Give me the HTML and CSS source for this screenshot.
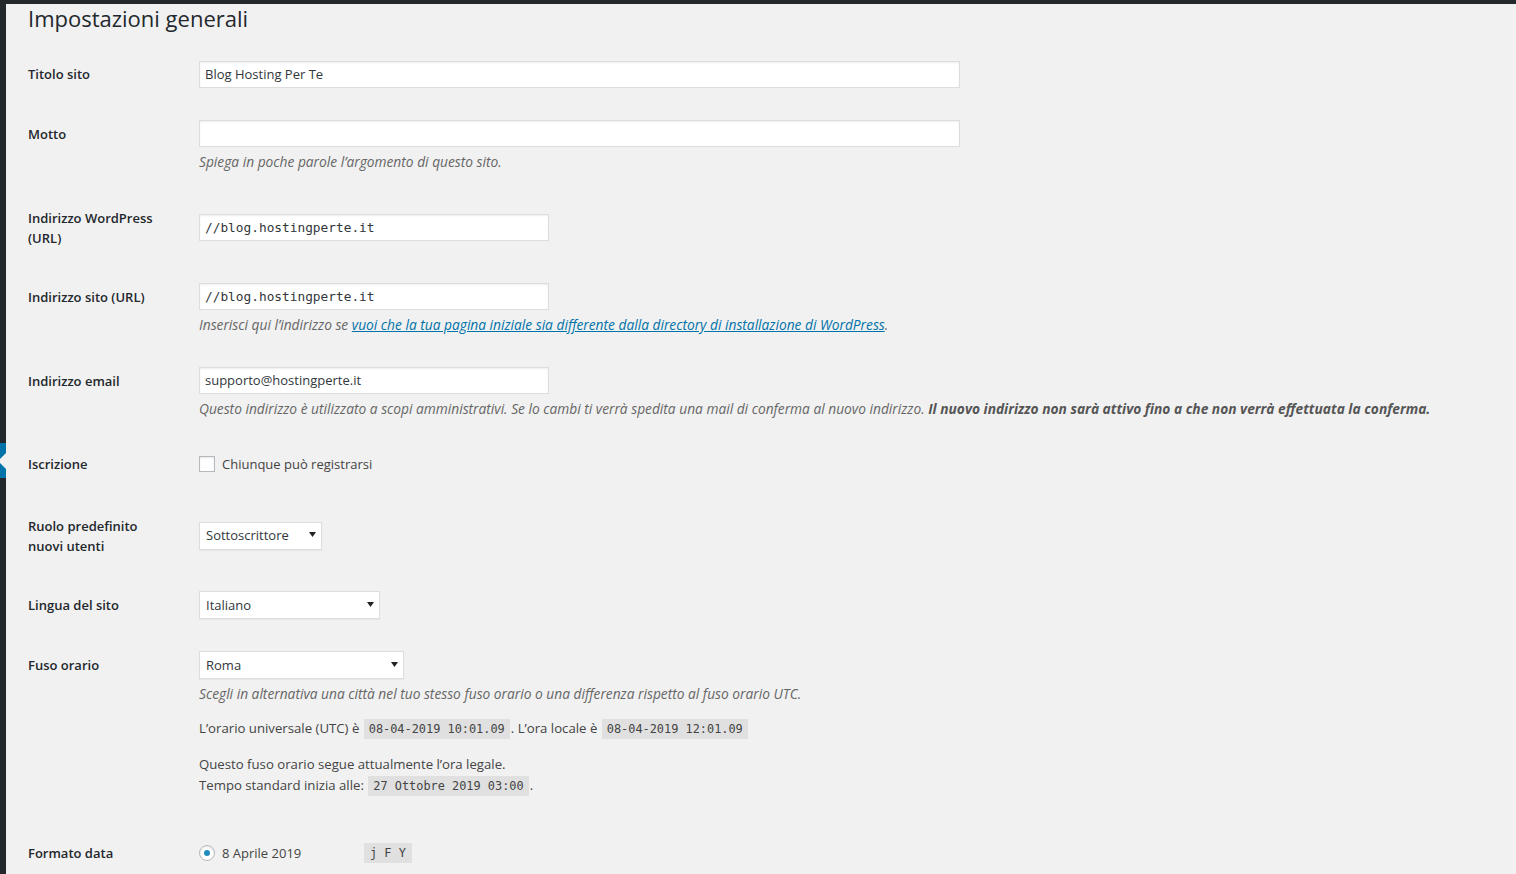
FILE: index.html
```html
<!DOCTYPE html>
<html lang="it">
<head>
<meta charset="utf-8">
<title>Impostazioni generali</title>
<link rel="stylesheet" href="styles.css">
</head>
<body>
<div class="topbar"></div>
<div class="layout">
  <aside class="sidebar">
    <div class="current"></div>
  </aside>
  <main class="wrap">
    <h1 class="title">Impostazioni generali</h1>
    <div class="form">
      <div class="row row-first">
        <div class="th">Titolo sito</div>
        <div class="td"><div class="input wide">Blog Hosting Per Te</div></div>
      </div>
      <div class="row">
        <div class="th">Motto</div>
        <div class="td">
          <div class="input wide"></div>
          <p class="description">Spiega in poche parole l’argomento di questo sito.</p>
        </div>
      </div>
      <div class="row">
        <div class="th">Indirizzo WordPress<br>(URL)</div>
        <div class="td"><div class="input regular mono">//blog.hostingperte.it</div></div>
      </div>
      <div class="row">
        <div class="th">Indirizzo sito (URL)</div>
        <div class="td">
          <div class="input regular mono">//blog.hostingperte.it</div>
          <p class="description">Inserisci qui l’indirizzo se <a href="#">vuoi che la tua pagina iniziale sia differente dalla directory di installazione di WordPress</a>.</p>
        </div>
      </div>
      <div class="row row-email">
        <div class="th">Indirizzo email</div>
        <div class="td">
          <div class="input regular">supporto@hostingperte.it</div>
          <p class="description">Questo indirizzo è utilizzato a scopi amministrativi. Se lo cambi ti verrà spedita una mail di conferma al nuovo indirizzo. <strong>Il nuovo indirizzo non sarà attivo fino a che non verrà effettuata la conferma.</strong></p>
        </div>
      </div>
      <div class="row">
        <div class="th">Iscrizione</div>
        <div class="td td-check">
          <label class="check"><span class="checkbox"></span>Chiunque può registrarsi</label>
        </div>
      </div>
      <div class="row">
        <div class="th">Ruolo predefinito<br>nuovi utenti</div>
        <div class="td"><div class="select sel-role"><span>Sottoscrittore</span><svg class="arrow" width="7" height="5" viewBox="0 0 7 5"><path d="M0 0h7L3.5 5z" fill="#222"/></svg></div></div>
      </div>
      <div class="row">
        <div class="th">Lingua del sito</div>
        <div class="td"><div class="select sel-lang"><span>Italiano</span><svg class="arrow" width="7" height="5" viewBox="0 0 7 5"><path d="M0 0h7L3.5 5z" fill="#222"/></svg></div></div>
      </div>
      <div class="row">
        <div class="th">Fuso orario</div>
        <div class="td">
          <div class="select sel-tz"><span>Roma</span><svg class="arrow" width="7" height="5" viewBox="0 0 7 5"><path d="M0 0h7L3.5 5z" fill="#222"/></svg></div>
          <p class="description">Scegli in alternativa una città nel tuo stesso fuso orario o una differenza rispetto al fuso orario UTC.</p>
          <p class="plain gap">L’orario universale (UTC) è <code>08-04-2019 10:01.09</code>. L’ora locale è <code>08-04-2019 12:01.09</code></p>
          <p class="plain gap last">Questo fuso orario segue attualmente l’ora legale.<br>Tempo standard inizia alle: <code>27 Ottobre 2019 03:00</code>.</p>
        </div>
      </div>
      <div class="row">
        <div class="th">Formato data</div>
        <div class="td">
          <label class="radio-line"><span class="radio checked"></span><span class="date-text">8 Aprile 2019</span><code>j F Y</code></label>
        </div>
      </div>
    </div>
  </main>
</div>
</body>
</html>
```

FILE: styles.css
```css
html {
  overflow: hidden;
  height: 100%;
}
body {
  margin: 0;
  background: #f1f1f1;
  color: #444;
  font-family: "Open Sans", "Noto Sans", sans-serif;
  font-size: 13px;
  height: 100%;
}
.topbar {
  height: 4px;
  background: #23282d;
}
.layout {
  display: flex;
  min-height: calc(100% - 4px);
}
.sidebar {
  width: 6px;
  flex: none;
  background: #23282d;
  overflow: hidden;
}
.current {
  position: relative;
  margin-top: 439px;
  height: 35px;
  background: #0073aa;
}
.current::after {
  content: "";
  position: absolute;
  right: 0;
  top: 50%;
  margin-top: -8px;
  border: 8px solid transparent;
  border-right-color: #f1f1f1;
}
.wrap {
  flex: 1;
  padding-left: 22px;
}
.title {
  margin: 0;
  font-size: 22px;
  font-weight: 400;
  line-height: 29px;
  color: #23282d;
}
.form {
  margin-top: 11px;
}
.row {
  display: grid;
  grid-template-columns: 171px 1fr;
}
.th {
  align-self: start;
  padding: 20px 10px 19px 0;
  line-height: 20px;
  font-weight: 600;
  font-size: 13px;
  color: #23282d;
}
.row-first .th {
  padding-bottom: 20px;
}
.td {
  align-self: center;
  padding: 15px 0;
  line-height: 21px;
}
.input {
  box-sizing: border-box;
  height: 27px;
  margin: 1px 0;
  padding: 0 5px;
  background: #fff;
  border: 1px solid #ddd;
  box-shadow: inset 0 1px 2px rgba(0, 0, 0, 0.07);
  color: #32373c;
  font-size: 13px;
  line-height: 25px;
  white-space: nowrap;
}
.wide {
  width: 761px;
}
.regular {
  width: 350px;
}
.mono {
  font-family: "DejaVu Sans Mono", "Liberation Mono", monospace;
  font-size: 12.8px;
}
.description {
  margin: 4px 0 1px;
  font-style: italic;
  color: #666;
  font-size: 13.75px;
  line-height: 21px;
  white-space: nowrap;
}
.row-email .description {
  margin-bottom: 0;
}
.row-email .td {
  padding-bottom: 15px;
}
.description strong {
  font-weight: 700;
  color: #555;
}
.description a {
  color: #0073aa;
  text-decoration: underline;
}
.plain {
  margin: 0;
  font-size: 13.2px;
  line-height: 21px;
  color: #444;
}
.gap {
  margin-top: 14px;
}
.last {
  margin-bottom: 11px;
}
code {
  font-family: "DejaVu Sans Mono", "Liberation Mono", monospace;
  font-size: 11.9px;
  padding: 3px 5px;
  margin: 0 1px;
  background: rgba(0, 0, 0, 0.07);
  color: #444;
}
.td-check {
  padding: 15px 0 17px;
}
.check {
  display: flex;
  align-items: center;
  line-height: 30px;
  color: #444;
}
.checkbox {
  box-sizing: border-box;
  width: 16px;
  height: 16px;
  margin-right: 7px;
  background: #fff;
  border: 1px solid #b4b9be;
  box-shadow: inset 0 1px 2px rgba(0, 0, 0, 0.1);
}
.select {
  box-sizing: border-box;
  height: 28px;
  margin: 1px 0;
  padding: 0 5px 0 6px;
  display: flex;
  align-items: center;
  justify-content: space-between;
  background: #fff;
  border: 1px solid #ddd;
  box-shadow: 0 1px 1px rgba(0, 0, 0, 0.04);
  color: #32373c;
  font-size: 13px;
}
.select .arrow {
  margin-top: -2px;
}
.sel-role {
  width: 123px;
}
.sel-lang {
  width: 181px;
}
.sel-tz {
  width: 205px;
}
.radio-line {
  display: flex;
  align-items: center;
  height: 20px;
  margin: 5px 0 7px;
  color: #444;
  font-size: 13px;
}
.radio {
  box-sizing: border-box;
  width: 16px;
  height: 16px;
  margin-right: 7px;
  border-radius: 50%;
  background: #fff;
  border: 1px solid #b4b9be;
  box-shadow: inset 0 1px 2px rgba(0, 0, 0, 0.1);
  display: flex;
  align-items: center;
  justify-content: center;
}
.radio.checked::before {
  content: "";
  width: 6px;
  height: 6px;
  border-radius: 50%;
  background: #1e8cbe;
}
.date-text {
  width: 141px;
}
.radio-line code {
  padding: 3px 6px;
  line-height: 14px;
}
```
